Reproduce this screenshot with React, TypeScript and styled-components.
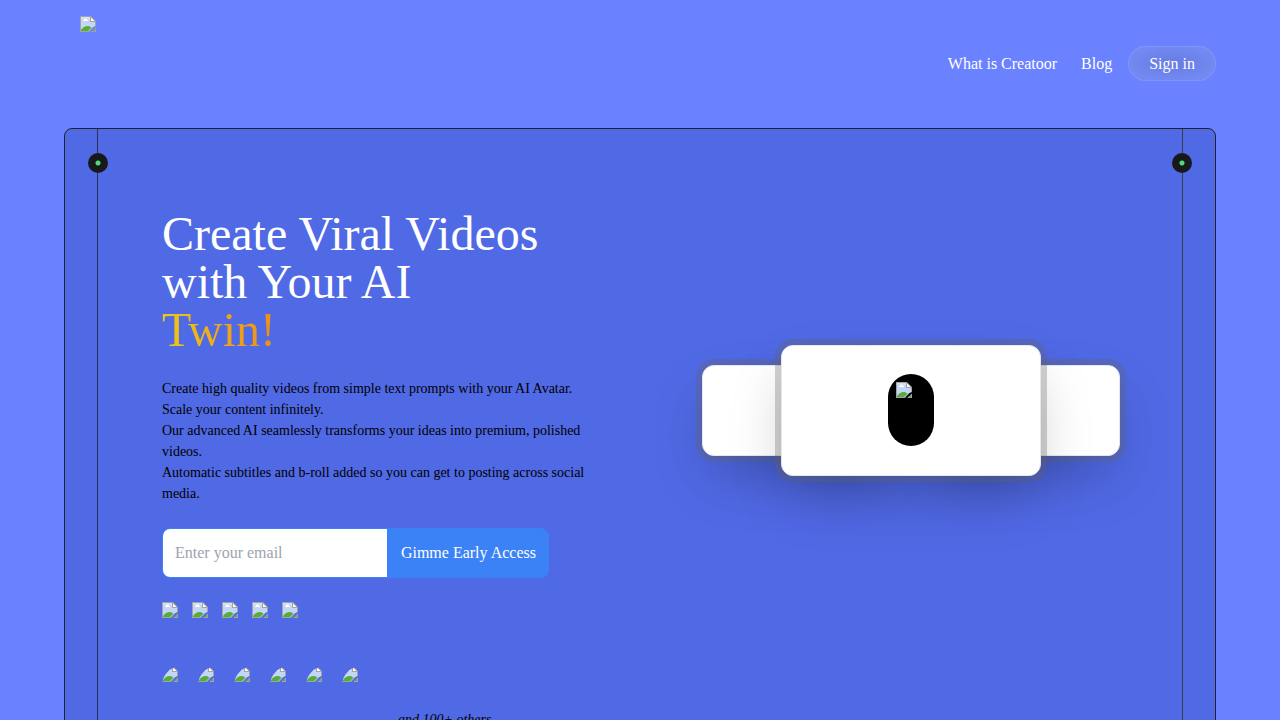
import React from "react";
import styled, { createGlobalStyle } from "styled-components";

const GlobalStyle = createGlobalStyle`
  *, *::before, *::after { box-sizing: border-box; }
  body {
    margin: 0;
    background: #6a82ff;
    color: #000;
    font-family: "Liberation Serif", "Times New Roman", serif;
    font-size: 16px;
    line-height: 24px;
  }
  h1, p { margin: 0; font-weight: 400; }
  button, input { font: inherit; }
`;

const Header = styled.header`
  display: flex;
  justify-content: space-between;
  align-items: center;
  height: 128px;
  padding: 0 64px 1px;
`;

const Logo = styled.a`
  align-self: flex-start;
  display: flex;
  padding: 16px;
`;

const Nav = styled.nav`
  display: flex;
  align-items: center;
  gap: 16px;
`;

const NavLinks = styled.div`
  display: flex;
  gap: 24px;
`;

const NavLink = styled.a`
  color: #fff;
  text-decoration: none;
`;

const SignIn = styled.button`
  height: 35px;
  padding: 0 20px;
  border: 1px solid rgba(255, 255, 255, 0.1);
  border-radius: 18px;
  background: radial-gradient(ellipse at center, #677be2 0%, #738af3 75%);
  color: #fff;
  line-height: 24px;
`;

const Panel = styled.main`
  position: relative;
  margin: 0 64px;
  padding: 81px 65px 64px 97px;
  border: 1px solid #1f2328;
  border-radius: 8px;
  background: #5069e5;
  display: grid;
  grid-template-columns: repeat(2, minmax(0, 1fr));
  gap: 32px;
`;

type Side = "left" | "right";

const Rail = styled.div<{ $side: Side }>`
  position: absolute;
  top: 0;
  bottom: 0;
  ${(p) => p.$side}: 32px;
  width: 1px;
  background: ${(p) => (p.$side === "left" ? "#2c3350" : "#363c48")};
`;

const Knob = styled.span<{ $side: Side }>`
  position: absolute;
  top: 24px;
  ${(p) => p.$side}: -9px;
  width: 20px;
  height: 20px;
  border-radius: 50%;
  background: radial-gradient(circle, #4ade80 0 2px, #18191b 3px);
`;

const Title = styled.h1`
  color: #fff;
  font-size: 48px;
  line-height: 48px;
`;

const Accent = styled.span`
  display: table;
  background: linear-gradient(90deg, #ecc81a, #f08c1a);
  background-clip: text;
  -webkit-background-clip: text;
  color: transparent;
`;

const Copy = styled.div`
  max-width: 440px;
  margin-top: 24px;
  font-size: 14px;
  line-height: 21px;
`;

const Form = styled.form`
  display: flex;
  width: 387px;
  max-width: 100%;
  height: 50px;
  margin-top: 24px;
  border: 1px solid #3b82f6;
  border-radius: 8px;
  background: #3b82f6;
  overflow: hidden;
`;

const EmailInput = styled.input`
  flex: 1;
  min-width: 0;
  padding: 0 12px;
  border: 0;
  border-radius: 0;
  background: #fff;
  color: #000;
  outline: none;
  &::placeholder { color: #9ca3af; opacity: 1; }
`;

const Submit = styled.button`
  padding: 0 12px 0 14px;
  border: 0;
  background: #3b82f6;
  color: #fff;
  white-space: nowrap;
`;

const Stars = styled.div`
  display: flex;
  gap: 14px;
  margin-top: 24px;
`;

const Crowd = styled.div`
  display: flex;
  gap: 16px;
  margin-top: 48px;
`;

const Avatars = styled.div`
  display: flex;
`;

const Avatar = styled.span`
  width: 40px;
  height: 40px;
  border-radius: 50%;
  overflow: hidden;
  & + & { margin-left: -4px; }
`;

const Others = styled.p`
  padding-top: 43px;
  font-size: 14px;
  line-height: 21px;
  font-style: italic;
`;

const Deck = styled.div`
  display: flex;
  justify-content: center;
  align-items: center;
  align-self: start;
  height: 131px;
  margin-top: 135px;
`;

const Card = styled.div<{ $front?: boolean }>`
  flex: none;
  display: flex;
  align-items: flex-start;
  justify-content: center;
  width: ${(p) => (p.$front ? 260 : 182)}px;
  height: ${(p) => (p.$front ? 131 : 91)}px;
  margin: 0 ${(p) => (p.$front ? -103 : 0)}px;
  padding-top: 28px;
  z-index: ${(p) => (p.$front ? 1 : 0)};
  border: 1px solid #e5e7eb;
  border-radius: 12px;
  background: #fff;
  box-shadow: 0 0 0 6px rgba(100, 100, 100, 0.3), 0 25px 60px -12px rgba(0, 0, 0, 0.27);
`;

const Pill = styled.div`
  width: 46px;
  height: 72px;
  padding: 8px;
  border-radius: 23px;
  background: #000;
`;

const Glyph = styled.svg`
  display: block;
  flex: none;
`;

function Picture({ label }: { label: string }) {
  return (
    <Glyph width="16" height="16" viewBox="0 0 16 16" role="img" aria-label={label}>
      <path d="M0 0h11l5 5v5l-2.500 1L9 16H0z" fill="#a3a3a3" />
      <path d="M1 1h9v5h5v4l-2 1-4.500 4H1z" fill="#c4d6f8" />
      <path d="M1 1h9v2H1z" fill="#d3e0fa" />
      <path d="M11 1.500L14.500 5H11z" fill="#fff" />
      <path d="M3 5h5V4H7V3H6V2.500H5V3H4v1H3z" fill="#fff" />
      <path d="M1 15v-1C3 11.500 5 10 7.500 10c1.500 0 2.800.500 4 1.700L8 15z" fill="#55ae36" />
      <path d="M16 11.500V16h-5z" fill="#a3a3a3" />
      <path d="M15 13v2h-2.500z" fill="#55ae36" />
    </Glyph>
  );
}

export default function App() {
  return (
    <>
      <GlobalStyle />
      <Header>
        <Logo href="#"><Picture label="Creatoor" /></Logo>
        <Nav>
          <NavLinks>
            <NavLink href="#about">What is Creatoor</NavLink>
            <NavLink href="#blog">Blog</NavLink>
          </NavLinks>
          <SignIn type="button">Sign in</SignIn>
        </Nav>
      </Header>
      <Panel>
        <Rail $side="left"><Knob $side="left" /></Rail>
        <Rail $side="right"><Knob $side="right" /></Rail>
        <section>
          <Title>
            Create Viral Videos<br />with Your AI <Accent>Twin!</Accent>
          </Title>
          <Copy>
            <p>Create high quality videos from simple text prompts with your AI Avatar. Scale your content infinitely.</p>
            <p>Our advanced AI seamlessly transforms your ideas into premium, polished videos.</p>
            <p>Automatic subtitles and b-roll added so you can get to posting across social media.</p>
          </Copy>
          <Form onSubmit={(e) => e.preventDefault()}>
            <EmailInput type="email" aria-label="Email" placeholder="Enter your email" />
            <Submit type="submit">Gimme Early Access</Submit>
          </Form>
          <Stars>
            {[1, 2, 3, 4, 5].map((n) => <Picture key={n} label={`Star ${n}`} />)}
          </Stars>
          <Crowd>
            <Avatars>
              {[1, 2, 3, 4, 5, 6].map((n) => (
                <Avatar key={n}><Picture label={`Creator ${n}`} /></Avatar>
              ))}
            </Avatars>
            <Others>and 100+ others</Others>
          </Crowd>
        </section>
        <Deck>
          <Card />
          <Card $front>
            <Pill><Picture label="Video" /></Pill>
          </Card>
          <Card />
        </Deck>
      </Panel>
    </>
  );
}
